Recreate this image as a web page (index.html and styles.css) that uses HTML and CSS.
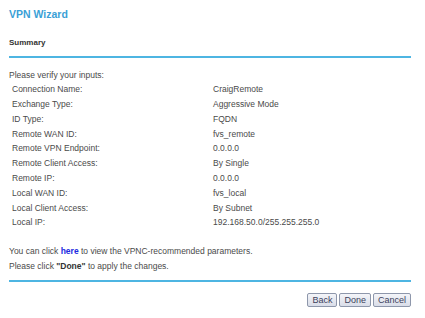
FILE: index.html
```html
<!DOCTYPE html>
<html lang="en">
<head>
    <meta charset="UTF-8">
    <title>VPN Wizard</title>
    <link rel="stylesheet" href="styles.css">
</head>
<body>
    <div class="wizard">
        <h1 class="title">VPN Wizard</h1>
        <div class="section-head">Summary</div>
        <p class="intro">Please verify your inputs:</p>
        <div class="summary">
            <div class="label">Connection Name:</div><div class="value">CraigRemote</div>
            <div class="label">Exchange Type:</div><div class="value">Aggressive Mode</div>
            <div class="label">ID Type:</div><div class="value">FQDN</div>
            <div class="label">Remote WAN ID:</div><div class="value">fvs_remote</div>
            <div class="label">Remote VPN Endpoint:</div><div class="value">0.0.0.0</div>
            <div class="label">Remote Client Access:</div><div class="value">By Single</div>
            <div class="label">Remote IP:</div><div class="value">0.0.0.0</div>
            <div class="label">Local WAN ID:</div><div class="value">fvs_local</div>
            <div class="label">Local Client Access:</div><div class="value">By Subnet</div>
            <div class="label">Local IP:</div><div class="value">192.168.50.0/255.255.255.0</div>
        </div>
        <div class="notes">
            <p>You can click <a href="#">here</a> to view the VPNC-recommended parameters.</p>
            <p>Please click <strong>"Done"</strong> to apply the changes.</p>
        </div>
        <div class="actions">
            <button type="button">Back</button>
            <button type="button">Done</button>
            <button type="button">Cancel</button>
        </div>
    </div>
</body>
</html>
```

FILE: styles.css
```css
body {
    margin: 0;
    background-color: #fff;
    font-family: "Liberation Sans", Arial, sans-serif;
    font-size: 8.5px;
    color: #4a4a4a;
}
.wizard {
    width: 402px;
    margin-left: 9px;
}
.title {
    margin: 7px 0 0;
    font-size: 10.5px;
    line-height: 14px;
    color: #3a9fd6;
}
.section-head {
    margin-top: 15px;
    padding-bottom: 6px;
    border-bottom: 2px solid #4eb5e2;
    font-size: 8px;
    font-weight: bold;
    line-height: 14px;
    color: #333;
}
.intro {
    margin: 9.5px 0 0;
    line-height: 14.8px;
}
.summary {
    display: grid;
    grid-template-columns: 204px 1fr;
    grid-auto-rows: 14.8px;
    line-height: 14.8px;
}
.label {
    padding-left: 3px;
}
.notes {
    margin-top: 14px;
    padding-bottom: 6px;
    border-bottom: 2px solid #4eb5e2;
}
.notes p {
    margin: 0;
    line-height: 14.8px;
}
.notes a {
    color: #1c2be0;
    font-weight: bold;
    text-decoration: none;
}
.notes strong {
    color: #333;
}
.actions {
    display: flex;
    justify-content: flex-end;
    gap: 2px;
    margin-top: 11px;
}
button {
    height: 14px;
    padding: 0 4px;
    font-family: inherit;
    font-size: 9px;
    line-height: 12px;
    color: #3c3f5c;
    background: linear-gradient(#f4f5f9, #d9dde8);
    border: 1px solid #8e97ab;
    border-radius: 2px;
}
```
